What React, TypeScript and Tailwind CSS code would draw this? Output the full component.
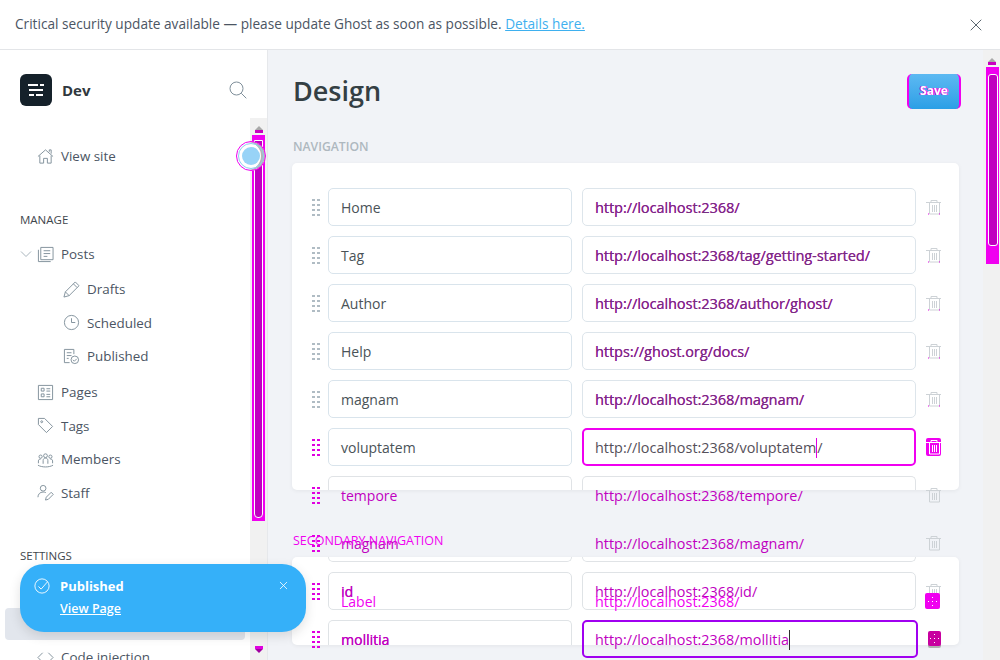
import React from "react";
import { X } from "lucide-react";

type Row = {
  label: string;
  url: string;
  focused?: boolean;
  clip?: "top" | "bottom";
  second?: boolean;
  last?: boolean;
  caret?: number;
};

const navRows: Row[] = [
  { label: "Home", url: "http://localhost:2368/" },
  { label: "Tag", url: "http://localhost:2368/tag/getting-started/" },
  { label: "Author", url: "http://localhost:2368/author/ghost/" },
  { label: "Help", url: "https://ghost.org/docs/" },
  { label: "magnam", url: "http://localhost:2368/magnam/" },
  { label: "voluptatem", url: "http://localhost:2368/voluptatem/", focused: true, caret: 32 },
  { label: "tempore", url: "http://localhost:2368/tempore/", clip: "top" },
  { label: "magnam", url: "http://localhost:2368/magnam/", clip: "bottom" },
  { label: "id", url: "http://localhost:2368/id/", second: true },
  { label: "mollitia", url: "http://localhost:2368/mollitia", second: true, last: true, caret: 30 },
];

const Grip = ({ color = "#b0bcc4" }: { color?: string }) => (
  <svg width="8" height="17" viewBox="0 0 8 17" fill={color}>
    {[0, 5, 10, 15].map((y) => (
      <g key={y}>
        <rect x="0" y={y} width="3" height="2" />
        <rect x="5" y={y} width="3" height="2" />
      </g>
    ))}
  </svg>
);

const Trash = ({ color = "#cdd2d6", dots = false }: { color?: string; dots?: boolean }) => (
  <svg width="15" height="15" viewBox="0 0 15 15" fill="none" stroke={color} strokeWidth="1">
    <path d="M0 2.5h15M5 2.5V0.5h6v2M3.5 2.5v11.5h10V2.5M6.5 5v7M8.5 5v7M10.5 5v7" />
    {dots && <path d="M2 14h1M13 14h1" stroke="#e000e0" />}
  </svg>
);

const PlusDots = () => (
  <svg width="9" height="9" viewBox="0 0 9 9" fill="white">
    <rect x="4" y="0" width="1" height="1" />
    <rect x="4" y="8" width="1" height="1" />
    <rect x="0" y="4" width="1" height="1" />
    <rect x="8" y="4" width="1" height="1" />
    <rect x="4" y="4" width="1" height="1" />
  </svg>
);

const UrlText = ({ row }: { row: Row }) => {
  const tone = row.focused
    ? "text-[#55505a]"
    : row.clip || row.second
      ? "text-[#c000c0]"
      : "text-[#75307f] [text-shadow:0.2px_0_0_#d000c0]";
  if (row.caret === undefined) {
    return <span className={`absolute left-[13px] top-[10px] text-[14.4px] leading-[20px] whitespace-nowrap ${tone}`}>{row.url}</span>;
  }
  return (
    <span className={`absolute left-[13px] top-[10px] text-[14.4px] leading-[20px] whitespace-nowrap ${tone}`}>
      {row.url.slice(0, row.caret)}
      <span className={`inline-block w-0 h-[20px] align-top border-l ${row.focused ? "border-[#e000e0]" : "border-[#303030]"}`} />
      {row.url.slice(row.caret)}
    </span>
  );
};

const NavRow = ({ row }: { row: Row }) => {
  const magenta = row.focused || row.clip || row.second;
  const text = row.second
    ? "text-[#c000c0] [text-shadow:0.3px_0_0_#c000c0]"
    : row.clip
      ? "text-[#c000c0]"
      : "text-[#4a5358]";

  return (
    <div className="flex h-[38px] items-center">
      <div className="w-[36px] pl-[20px] flex items-center">
        <Grip color={magenta ? "#e000e0" : "#b0bcc4"} />
      </div>
      <div className="relative w-[244px] h-full">
        {!row.clip && !row.last && (
          <div className={`absolute inset-0 rounded-[5px] border bg-white ${row.second ? "border-[#dfe3e6]" : "border-[#d9e4ec]"}`} />
        )}
        {row.clip === "top" && (
          <div className="absolute inset-x-0 top-0 h-[14px] border-x border-t border-[#e0e3e6] bg-white rounded-t-[5px]" />
        )}
        {row.clip === "bottom" && (
          <div className="absolute inset-x-0 bottom-0 h-[5px] border-x border-b border-[#e0e3e6] rounded-b-[5px]" />
        )}
        {row.last && (
          <div className="absolute inset-x-0 top-0 h-[25px] border-x border-t border-[#dfe3e6] rounded-t-[5px]" />
        )}
        <span className={`absolute left-[13px] top-[10px] text-[14px] leading-[20px] ${text}`}>{row.label}</span>
      </div>
      <div className="relative ml-[10px] w-[334px] h-full">
        {row.focused && <div className="absolute inset-0 rounded-[5px] border-2 border-[#f000f0] bg-white" />}
        {row.last && <div className="absolute inset-y-0 left-0 -right-[2px] rounded-[5px] border-2 border-[#a000f0]" />}
        {!row.focused && !row.clip && !row.last && (
          <div className={`absolute inset-0 rounded-[5px] border bg-white ${row.second ? "border-[#dfe3e6]" : "border-[#dde5eb]"}`} />
        )}
        {row.clip === "top" && (
          <div className="absolute inset-x-0 top-0 h-[14px] border-x border-t border-[#e0e3e6] bg-white rounded-t-[5px]" />
        )}
        {row.clip === "bottom" && (
          <div className="absolute inset-x-0 bottom-0 h-[5px] border-x border-b border-[#e0e3e6] rounded-b-[5px]" />
        )}
        <UrlText row={row} />
      </div>
      <div className="ml-[9px] w-[16px] flex justify-center">
        {row.focused ? (
          <div className="bg-[#f000f0] rounded-[2px] w-[15px] h-[18px] flex items-center justify-center">
            <Trash color="#ffffff" />
          </div>
        ) : row.last ? (
          <div className="bg-[#c800a0] rounded-[2px] ml-[3px] w-[15px] h-[15px] mb-[2px] shadow-[0_2px_0_#b0b0b0] flex items-center justify-center">
            <PlusDots />
          </div>
        ) : (
          <Trash color="#cdd2d6" dots={!magenta} />
        )}
      </div>
    </div>
  );
};

const Icon = ({ children }: { children: React.ReactNode }) => (
  <svg width={17} height={17} viewBox="0 0 18 18" fill="none" stroke="#7f8f9a" strokeWidth="1" className="shrink-0">
    {children}
  </svg>
);

const SideItem = ({ icon, label }: { icon: React.ReactNode; label: string }) => (
  <div className="flex items-center gap-[7px] h-[20px] text-[13.4px] text-[#4b5563]">
    {icon}
    <span>{label}</span>
  </div>
);

const Arrow = ({ down = false }: { down?: boolean }) =>
  down ? (
    <svg width="10" height="8" viewBox="0 0 10 8">
      <path d="M1 1h8v3H1z" fill="#e000e0" />
      <path d="M5 8l4-4H1z" fill="#a000a0" />
    </svg>
  ) : (
    <svg width="10" height="8" viewBox="0 0 10 8">
      <path d="M5 0l4 4H1z" fill="#a9a9a9" />
      <path d="M1 4h8v3H1z" fill="#c800c0" />
    </svg>
  );

const Sidebar = () => (
  <aside className="relative w-[268px] shrink-0 bg-white border-r border-[#e6e8eb] h-[611px] overflow-hidden">
    <div className="flex items-center pl-[20px] pt-[24px]">
      <div className="w-[32px] h-[32px] rounded-[6px] bg-[#15212a] flex flex-col items-center justify-center gap-[3px]">
        <div className="flex gap-[2px]"><div className="w-[10px] h-[2px] bg-white" /><div className="w-[4px] h-[2px] bg-white" /></div>
        <div className="w-[14px] h-[2px] bg-white" />
        <div className="flex gap-[2px]"><div className="w-[5px] h-[2px] bg-white" /><div className="w-[7px] h-[2px] bg-white" /></div>
      </div>
      <span className="ml-[10px] text-[15px] font-bold text-[#30383e]">Dev</span>
      <svg width="18" height="18" viewBox="0 0 18 18" fill="none" stroke="#7f8f9a" className="ml-[138px]">
        <circle cx="7.5" cy="7.5" r="6.5" />
        <path d="M12.3 12.3l5 5" />
      </svg>
    </div>

    <div className="pl-[37px] mt-[40px]">
      <SideItem
        label="View site"
        icon={<Icon><path d="M1 9l8-7 8 7M3 8v8h4v-5h4v5h4V8M13 4V2h2v4" /></Icon>}
      />
    </div>

    <div className="pl-[20px] mt-[46px] text-[11.5px] font-medium text-[#3f474d] leading-[16px]">MANAGE</div>

    <div className="pl-[20px] mt-[16px] flex items-center">
      <svg width="12" height="12" viewBox="0 0 12 12" fill="none" stroke="#a9b5bd" className="mr-[5px]"><path d="M1 3.5l5 5 5-5" /></svg>
      <SideItem
        label="Posts"
        icon={<Icon><path d="M4 1.5h13v13H4zM1.5 4v12.5h13M7 5h7M7 8h7M7 11h4" /></Icon>}
      />
    </div>

    <div className="pl-[63px] mt-[15.4px] flex flex-col gap-[13.5px]">
      <SideItem label="Drafts" icon={<Icon><path d="M1 17l1.5-5.5L13 1l4 4L6.5 15.5zM2.5 11.5l4 4M11 3l4 4" /></Icon>} />
      <SideItem label="Scheduled" icon={<Icon><circle cx="9" cy="9" r="7.5" /><path d="M9 4.5V9h4" /></Icon>} />
      <SideItem label="Published" icon={<Icon><path d="M7 15.5H1.5v-14h10v5M4 5h5M4 8h5M4 11h2" /><circle cx="12.5" cy="12.5" r="4" /><path d="M10.5 12.5l1.5 1.5 2.5-2.5" /></Icon>} />
    </div>

    <div className="pl-[37px] mt-[16px] flex flex-col gap-[13.5px]">
      <SideItem label="Pages" icon={<Icon><path d="M1.5 1.5h15v15h-15zM4.5 4.5h3v3h-3zM4.5 10.5h3v3h-3zM10 5h4M10 7.5h4M10 11h4M10 13.5h4" /></Icon>} />
      <SideItem label="Tags" icon={<Icon><path d="M1.5 1.5h6.5l8.5 8.5-6.5 6.5L1.5 8z" /><circle cx="5" cy="5" r="1" /></Icon>} />
      <SideItem label="Members" icon={<Icon><circle cx="9" cy="5" r="2" /><circle cx="3.8" cy="6" r="1.7" /><circle cx="14.2" cy="6" r="1.7" /><path d="M6.5 13.5V10c0-1.5 1-2.5 2.5-2.5s2.5 1 2.5 2.5v3.5M1.5 13v-2.5C1.5 9 2.5 8.5 4 8.5M16.5 13v-2.5c0-1.5-1-2-2.5-2M1 15c4 2.5 12 2.5 16 0" /></Icon>} />
      <SideItem label="Staff" icon={<Icon><circle cx="6.5" cy="4.5" r="3" /><path d="M1 14c0-3 2-5.5 5.5-5.5 1 0 2 .2 2.8.6M9 17l.8-3L15 8.8l2.2 2.2L12 16.2z" /></Icon>} />
    </div>

    <div className="pl-[20px] mt-[45.6px] text-[11.5px] font-medium text-[#3f474d] leading-[16px]">SETTINGS</div>

    <div className="mx-[5px] mt-[44px] w-[240px] h-[32px] rounded-[4px] bg-[#e2e6ed]" />
    <div className="pl-[37px] mt-[7px]">
      <SideItem label="Code injection" icon={<Icon><path d="M6 4L1 9l5 5M12 4l5 5-5 5" /></Icon>} />
    </div>

    {/* sidebar scrollbar */}
    <div className="absolute right-0 top-[68px] bottom-0 w-[17px] bg-[#f1f1f1] flex flex-col items-center">
      <div className="mt-[8px]"><Arrow /></div>
      <div className="mt-px w-[13px] h-[386px] bg-[#f000f0] px-[2px] pt-[5px] pb-[3px]">
        <div className="h-full w-full bg-[#c000c0] rounded-b-[4px] border border-white" />
      </div>
      <div className="mt-[124px]"><Arrow down /></div>
    </div>

    {/* focus ring on the scrollbar */}
    <div className="absolute left-[236px] top-[91px] w-[30px] h-[30px] rounded-full border border-[#f000f0] bg-white flex items-center justify-center shadow-[inset_-4px_0_0_#b5b5b5]">
      <div className="w-[26px] h-[26px] rounded-full border border-[#8fcdf0] flex items-center justify-center">
        <div className="w-[18px] h-[18px] rounded-full bg-[#98d3f7]" />
      </div>
    </div>
  </aside>
);

export default function App() {
  return (
    <div className="relative w-[1000px] h-[660px] overflow-hidden bg-[#f1f3f7] font-['Open_Sans',sans-serif] text-[14px]">
      <div className="flex items-center h-[50px] px-[15px] bg-white border-b border-[#e3e5e8]">
        <p className="text-[#4b5563] text-[13.65px]">
          Critical security update available — please update Ghost as soon as possible.{" "}
          <span className="text-[#3eb0ef] underline">Details here.</span>
        </p>
        <X className="ml-auto mr-[-1px]" size={20} strokeWidth={1.2} color="#5b6770" />
      </div>

      <div className="flex">
        <Sidebar />

        <main className="relative flex-1 h-[610px] px-[24px]">
          <div className="flex items-center justify-between pt-[23px] w-[669px]">
            <h1 className="pl-px text-[27px] leading-[36px] font-semibold text-[#343f44]">Design</h1>
            <button className="w-[54px] h-[35px] rounded-[5px] border-x-2 border-x-[#f000f0] bg-gradient-to-b from-[#5cb9f2] to-[#2a9fe6] text-[12px] font-bold text-white [text-shadow:1px_0_0_#f000f0,-1px_0_0_#d000d0]">
              Save
            </button>
          </div>

          <h2 className="mt-[30px] pl-px text-[12.2px] leading-[16px] font-semibold text-[#aeb8bf]">NAVIGATION</h2>

          <div className="mt-[8px] w-[667px] h-[327px] rounded-[5px] bg-white shadow-[0_1px_4px_rgba(0,0,0,0.06)] pt-[25px]">
            <div className="relative z-10 flex flex-col gap-[10px]">
              {navRows.map((row, i) => (
                <NavRow key={i} row={row} />
              ))}
            </div>
          </div>

          <div className="relative z-20 h-[67px] pt-[43px] pl-px text-[12.5px] leading-[16px] text-[#f000f0] pointer-events-none">
            SECONDARY NAVIGATION
          </div>

          <div className="w-[667px] h-[88px] rounded-[5px] bg-white shadow-[0_1px_4px_rgba(0,0,0,0.06)]" />

          {/* ghost of the new-item row */}
          <span className="absolute z-20 left-[73px] top-[543px] text-[14px] leading-[18px] text-[#f000f0]">Label</span>
          <span className="absolute z-20 left-[327px] top-[543px] text-[14.4px] leading-[18px] text-[#f000f0]">http://localhost:2368/</span>
          <div className="absolute z-20 left-[657px] top-[543px] w-[15px] h-[16px] rounded-[2px] bg-[#f000f0] flex items-center justify-center">
            <PlusDots />
          </div>
        </main>
      </div>

      {/* page scrollbar */}
      <div className="absolute right-0 top-[50px] bottom-0 w-[17px] bg-[#f1f1f1] flex flex-col items-start pl-[3px]">
        <div className="mt-[8px] ml-px"><Arrow /></div>
        <div className="mt-px w-[13px] h-[197px] bg-[#f000f0] pl-[2px] pr-px pt-[7px] pb-[18px]">
          <div className="h-full w-full bg-[#c000c0] rounded-[3px] border border-white" />
        </div>
      </div>

      {/* toast */}
      <div className="absolute left-[20px] top-[564px] w-[286px] h-[68px] rounded-[24px] bg-[#35b0f9] shadow-[0_4px_12px_rgba(0,0,0,0.12)] text-white">
        <div className="flex items-start pl-[14px] pt-[13px]">
          <svg width="16" height="16" viewBox="0 0 18 18" fill="none" stroke="white" strokeWidth="1" className="mt-px">
            <circle cx="9" cy="9" r="8" />
            <path d="M5 9.5l3 3 7-8" />
          </svg>
          <div className="ml-[10px]">
            <div className="text-[13px] leading-[18px] font-bold">Published</div>
            <div className="mt-[5px] text-[12.5px] leading-[18px] font-semibold underline">View Page</div>
          </div>
          <X className="ml-auto mr-[16px] mt-[2px]" size={13} strokeWidth={1.5} />
        </div>
      </div>
    </div>
  );
}
